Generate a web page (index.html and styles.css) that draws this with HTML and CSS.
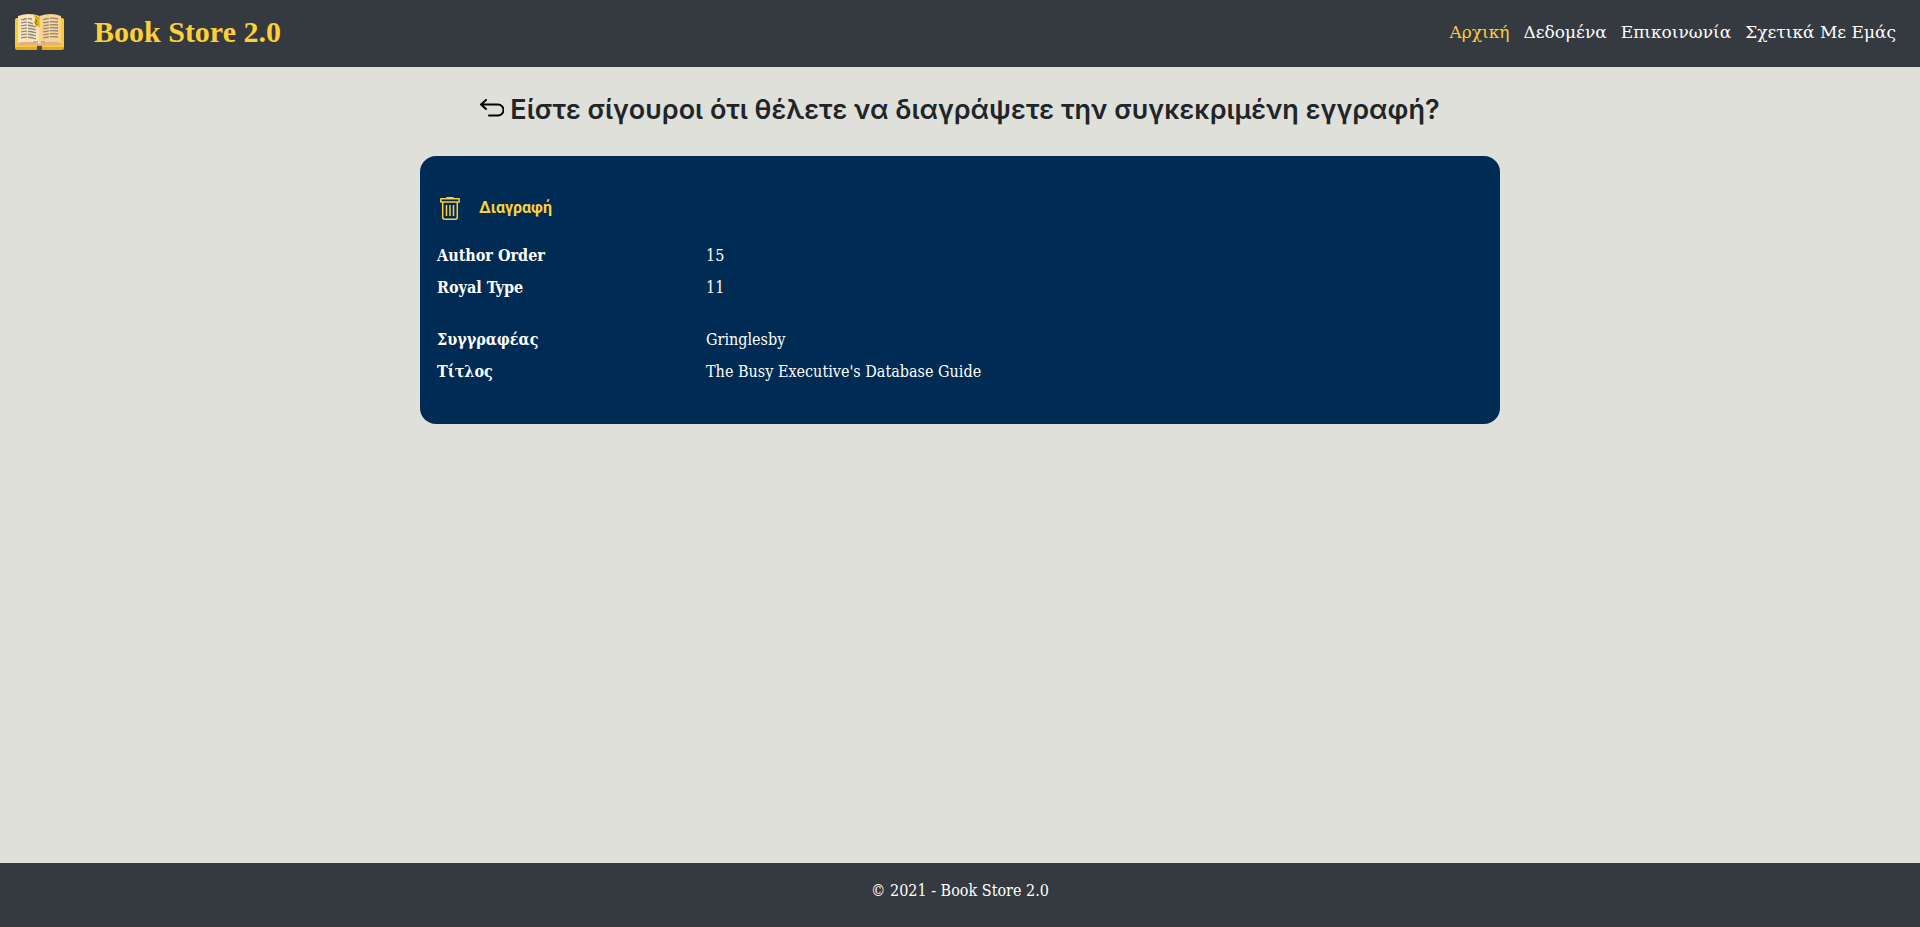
FILE: index.html
```html
<!DOCTYPE html>
<html lang="el">
<head>
<meta charset="utf-8">
<title>Book Store 2.0</title>
<link rel="stylesheet" href="styles.css">
</head>
<body>
<header class="navbar">
  <a class="brand" href="#">
    <svg class="brand-logo" viewBox="0 0 49 36" aria-hidden="true">
      <rect x="0" y="4" width="49" height="31" rx="2" fill="#fccb2f"/>
      <path d="M0 33h49v1q0 2-2 2H2q-2 0-2-2z" fill="#e5aa20"/>
      <path d="M22 31h5v5h-5z" fill="#5c4b35"/>
      <path d="M3 2Q14-2 24.500 2v30Q14 28 3 31z" fill="#fce5b5"/>
      <path d="M24.500 2Q36-2 46 2v29Q36 28 24.500 32z" fill="#fbd38e"/>
      <path d="M3 29q11-3 21.500 1 11-4 21.500-1v2.500q-11-1-21.500 .5-10.500-1.500-21.500-.5z" fill="#dfb18b"/>
      <g fill="none" stroke="#8b8787" stroke-width="1.3" stroke-dasharray="6 1 9 1">
        <path d="M6 6q6-2 11-1M6 9q7-2 12 1M6 12q7-2 15 1M6 15q7-2 15 1M6 18q7-2 15 1M6 21q7-2 15 1M6 24q7-2 15 1"/>
        <path d="M28 6q7-3 15-1M28 9q7-2 15-1M28 12q7-2 15-1M28 15q7-2 15-1M28 18q7-2 15-1M28 21q7-2 15-1M28 24q7-2 15-1"/>
      </g>
      <path d="M19 1l5.500 2v10l-3-1-2 2 1-4-2-2 2-2z" fill="#d9ac18"/>
      <path d="M20 5l2 2-2 2 2 2" fill="none" stroke="#857024"/>
      <path d="M18 28h5M26 28h4" stroke="#a9855d"/>
    </svg>
    <span class="brand-name">Book Store 2.0</span>
  </a>
  <nav class="nav-links">
    <a class="nav-link active" href="#">Αρχική</a>
    <a class="nav-link" href="#">Δεδομένα</a>
    <a class="nav-link" href="#">Επικοινωνία</a>
    <a class="nav-link" href="#">Σχετικά Με Εμάς</a>
  </nav>
</header>
<main class="content">
  <div class="title-row">
    <a class="back" href="#" aria-label="Επιστροφή">
      <svg class="back-icon" viewBox="0 0 24 18" fill="none" stroke="#000" stroke-width="2" stroke-linecap="round" stroke-linejoin="round"><path d="M6 1L1 5.500 6 10M1 5.500h17a5.500 5.500 0 0 1 0 11H9"/></svg>
    </a>
    <h1 class="title">Είστε σίγουροι ότι θέλετε να διαγράψετε την συγκεκριμένη εγγραφή?</h1>
  </div>
  <section class="card">
    <button class="delete" type="button">
      <svg class="delete-icon" viewBox="0 0 20 23" fill="none" stroke="#fdcf38" stroke-width="1.500" stroke-linejoin="round" aria-hidden="true"><path d="M7 1.500V.8h6v.7M.8 1.800h18.400v3.200H.8zM2.700 5v15.200q0 2 2 2h10.600q2 0 2-2V5M6.500 8v11M10 8v11M13.500 8v11"/></svg>
      <span>Διαγραφή</span>
    </button>
    <dl class="details">
      <dt>Author Order</dt><dd>15</dd>
      <dt>Royal Type</dt><dd>11</dd>
    </dl>
    <dl class="details">
      <dt>Συγγραφέας</dt><dd>Gringlesby</dd>
      <dt>Τίτλος</dt><dd>The Busy Executive's Database Guide</dd>
    </dl>
  </section>
</main>
<footer class="footer">© 2021 - Book Store 2.0</footer>
</body>
</html>
```
FILE: styles.css
```css
* {
  box-sizing: border-box;
}

body {
  display: flex;
  flex-direction: column;
  min-height: 100vh;
  margin: 0;
  background: #dfe0da;
  color: #fff;
  font-family: "Roboto Slab", "DejaVu Serif Condensed", "DejaVu Serif", serif;
  font-size: 16px;
  line-height: 24px;
}

a {
  color: inherit;
  text-decoration: none;
}

.navbar {
  display: flex;
  align-items: center;
  justify-content: space-between;
  padding: 8px 24px 12px 15px;
  min-height: 67px;
  background: #343a40;
}

.brand {
  display: flex;
  align-items: center;
  gap: 30px;
  color: #fdcf38;
}

.brand-logo {
  width: 49px;
  height: 36px;
}

.brand-name {
  font-family: "Liberation Serif", serif;
  font-size: 30px;
  font-weight: 700;
  line-height: 36px;
}

.nav-links {
  display: flex;
  gap: 14px;
  font-family: "Roboto Slab", "DejaVu Serif", serif;
  font-size: 17px;
}

.nav-link.active {
  color: #fdcf38;
}

.content {
  flex: 1;
  padding: 24px 16px;
}

.title-row {
  display: flex;
  align-items: center;
  justify-content: center;
  gap: 6px;
  margin-bottom: 28px;
}

.back {
  display: flex;
  padding-bottom: 4px;
}

.back-icon {
  width: 24px;
  height: 18px;
}

.title {
  margin: 0;
  color: #212529;
  font-family: Inter, sans-serif;
  font-size: 27px;
  font-weight: 600;
  line-height: 37px;
}

.card {
  max-width: 1080px;
  margin: 0 auto;
  padding: 40px 17px;
  border-radius: 16px;
  background: #002b54;
}

.delete {
  display: flex;
  align-items: center;
  gap: 19px;
  margin: 0 0 24px;
  padding: 0 3px;
  border: 0;
  background: none;
  color: #fdcf38;
  font-family: Roboto, sans-serif;
  font-size: 16px;
  font-weight: 700;
  line-height: 24px;
}

.delete-icon {
  width: 20px;
  height: 23px;
}

.details {
  display: grid;
  grid-template-columns: 1fr 3fr;
  gap: 8px 10px;
  margin: 0;
}

.details + .details {
  margin-top: 28px;
}

.details dt {
  font-weight: 700;
}

.details dd {
  margin: 0;
}

.footer {
  min-height: 64px;
  padding: 16px;
  background: #343a40;
  text-align: center;
}
```
